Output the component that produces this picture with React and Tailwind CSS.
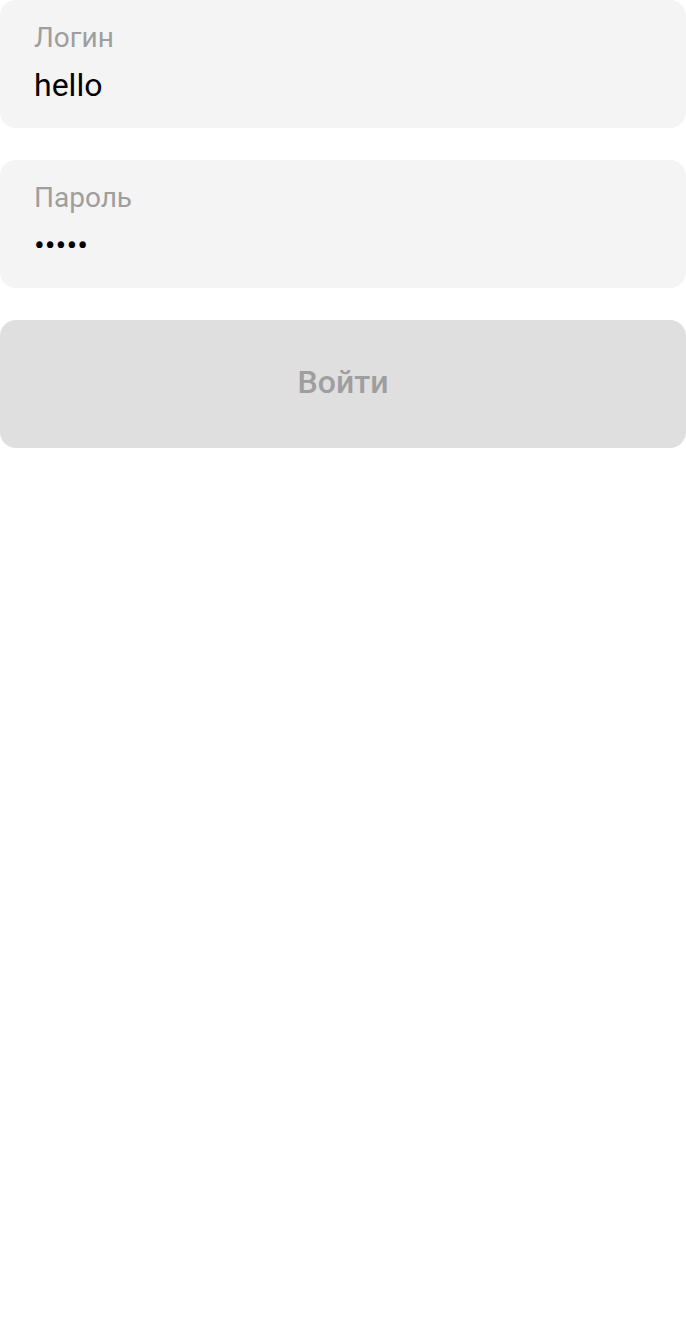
export default function App() {
  return (
    <div className="flex flex-col gap-8 bg-white" style={{ fontFamily: 'Roboto, sans-serif' }}>
      <label className="flex h-32 flex-col rounded-[16px] bg-[#f4f4f4] px-[34px] pt-[22px]">
        <span className="text-[28px] leading-[32px] text-[#9e9e9e]">Логин</span>
        <input
          readOnly
          value="hello"
          className="mt-[12px] bg-transparent text-[32px] leading-[38px] text-black outline-none"
        />
      </label>
      <label className="flex h-32 flex-col rounded-[16px] bg-[#f4f4f4] px-[34px] pt-[22px]">
        <span className="text-[28px] leading-[32px] text-[#9e9e9e]">Пароль</span>
        <input
          readOnly
          type="password"
          value="hello"
          className="mt-[12px] bg-transparent text-[32px] leading-[38px] text-black outline-none"
        />
      </label>
      <button className="h-32 rounded-[16px] bg-[#dfdfdf] pb-[4px] text-[32px] font-medium text-[#9e9e9e]">
        Войти
      </button>
    </div>
  )
}
